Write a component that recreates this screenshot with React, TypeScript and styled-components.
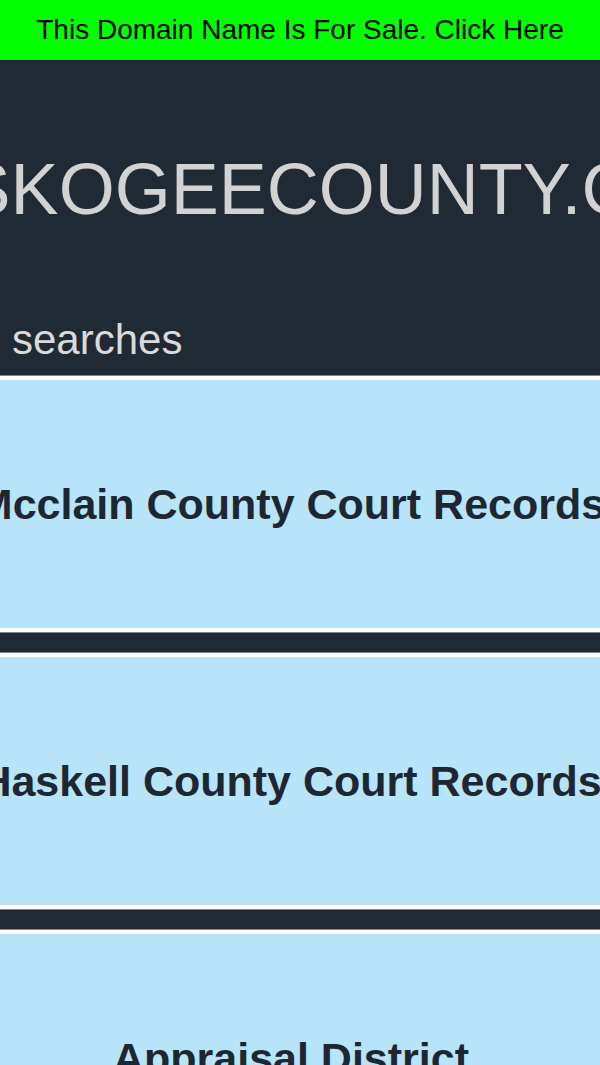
import React from "react";
import styled, { createGlobalStyle } from "styled-components";

const Global = createGlobalStyle`
  html, body { margin: 0; padding: 0; background: #1f2a35; overflow: hidden; }
  body { font-family: "Liberation Sans", Arial, sans-serif; }
`;

const Page = styled.div`
  width: 600px;
  overflow: hidden;
`;

const SaleBar = styled.a`
  display: flex;
  justify-content: center;
  align-items: center;
  height: 60px;
  background: #00ff00;
  color: #000;
  font-size: 28px;
  text-decoration: none;
  white-space: nowrap;
`;

const Header = styled.header`
  background: #1f2a35;
  height: 315px;
  display: flex;
  flex-direction: column;
`;

const TitleRow = styled.div`
  display: flex;
  justify-content: center;
  padding-top: 84px;
  height: 90px;
`;

const Title = styled.h1`
  margin: 0;
  font-size: 72px;
  font-weight: normal;
  line-height: 90px;
  color: #d2d2d2;
  white-space: nowrap;
`;

const Sub = styled.div`
  margin-top: 84px;
  padding-left: 12px;
  font-size: 42px;
  line-height: 44px;
  color: #dadada;
`;

const List = styled.div`
  display: flex;
  flex-direction: column;
  gap: 21px;
  padding-top: 1px;
`;

const Card = styled.a`
  display: flex;
  justify-content: center;
  align-items: center;
  height: 248px;
  padding-right: 18px;
  background: #b8e4fa;
  border-top: 4px solid #fff;
  border-bottom: 4px solid #fff;
  box-shadow: 0 1px 0 #7d858e, 0 -1px 0 #7d858e;
  text-decoration: none;
`;

const CardText = styled.span`
  font-size: 43px;
  font-weight: bold;
  color: #1d2731;
  white-space: nowrap;
`;

const items = [
  "Mcclain County Court Records",
  "Haskell County Court Records",
  "Appraisal District",
];

export default function App() {
  return (
    <Page>
      <Global />
      <SaleBar href="#">This Domain Name Is For Sale. Click Here</SaleBar>
      <Header>
        <TitleRow>
          <Title>MUSKOGEECOUNTY.COM</Title>
        </TitleRow>
        <Sub>searches</Sub>
      </Header>
      <List>
        {items.map((t) => (
          <Card key={t} href="#">
            <CardText>{t}</CardText>
          </Card>
        ))}
      </List>
    </Page>
  );
}
